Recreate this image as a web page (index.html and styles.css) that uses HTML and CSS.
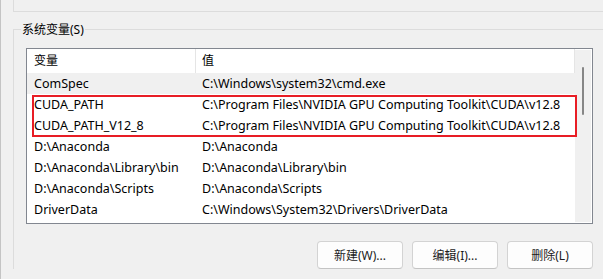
FILE: index.html
```html
<!DOCTYPE html>
<html lang="zh-CN">
  <head>
    <meta charset="UTF-8">
    <meta name="viewport" content="width=device-width, initial-scale=1.0">
    <title>环境变量</title>
    <link rel="stylesheet" href="styles.css">
  </head>

  <body>
    <div class="window">
      <div class="prev-group"></div>
      <fieldset class="group">
        <legend>系统变量(S)</legend>
        <div class="group-body">
          <div class="listbox">
            <div class="table">
              <div class="thead">
                <div class="cell name">变量</div>
                <div class="cell value">值</div>
              </div>
              <div class="row selected">
                <div class="cell name">ComSpec</div>
                <div class="cell value">C:\Windows\system32\cmd.exe</div>
              </div>
              <div class="marked">
                <div class="row">
                  <div class="cell name">CUDA_PATH</div>
                  <div class="cell value">C:\Program Files\NVIDIA GPU Computing Toolkit\CUDA\v12.8</div>
                </div>
                <div class="row">
                  <div class="cell name">CUDA_PATH_V12_8</div>
                  <div class="cell value">C:\Program Files\NVIDIA GPU Computing Toolkit\CUDA\v12.8</div>
                </div>
              </div>
              <div class="row">
                <div class="cell name">D:\Anaconda</div>
                <div class="cell value">D:\Anaconda</div>
              </div>
              <div class="row">
                <div class="cell name">D:\Anaconda\Library\bin</div>
                <div class="cell value">D:\Anaconda\Library\bin</div>
              </div>
              <div class="row">
                <div class="cell name">D:\Anaconda\Scripts</div>
                <div class="cell value">D:\Anaconda\Scripts</div>
              </div>
              <div class="row">
                <div class="cell name">DriverData</div>
                <div class="cell value">C:\Windows\System32\Drivers\DriverData</div>
              </div>
            </div>
            <div class="scrollbar">
              <div class="thumb"></div>
            </div>
          </div>
          <div class="buttons">
            <button>新建(W)...</button>
            <button>编辑(I)...</button>
            <button>删除(L)</button>
          </div>
        </div>
      </fieldset>
    </div>
  </body>
</html>
```

FILE: styles.css
```css
* {
  margin: 0;
  padding: 0;
  box-sizing: border-box;
}

body {
  background-color: #f0f0f0;
  font-family: "Noto Sans", "Noto Sans CJK SC", sans-serif;
  font-size: 12px;
  color: #000;
}

.window {
  height: 279px;
  border-left: 1px solid #c4c4c4;
  overflow: hidden;
}

/* bottom edge of the user variables group above */
.prev-group {
  margin-left: 12px;
  height: 12px;
  border-left: 1px solid #dcdcdc;
  border-bottom: 1px solid #dcdcdc;
}

.group {
  margin: 9px 0 0 12px;
  border: 0;
  border-top: 1px solid #dcdcdc;
  border-left: 1px solid #dcdcdc;
  padding: 10px 0 0 12px;
  min-width: 0;
}

.group legend {
  margin-left: -5px;
  padding: 0 1px;
  line-height: 17px;
}

.group-body {
  width: 567px;
}

.listbox {
  display: flex;
  height: 176px;
  border: 1px solid #828790;
  padding: 0 1px 1px 0;
  background-color: #fff;
  overflow: hidden;
}

.table {
  flex: 1;
  font-size: 12.5px;
}

.thead {
  display: flex;
  height: 24px;
  border-right: 1px solid #e5e5e5;
}

.thead .cell {
  line-height: 24px;
  font-size: 12px;
}

.row {
  display: flex;
  height: 21px;
  line-height: 21px;
}

.row.selected {
  background-color: #f0f0f0;
}

.cell {
  white-space: nowrap;
}

.cell.name {
  width: 169px;
  padding-left: 7px;
}

.thead .cell.name {
  border-right: 1px solid #e5e5e5;
}

.cell.value {
  padding-left: 6px;
}

.marked {
  position: relative;
}

.marked::after {
  content: "";
  position: absolute;
  left: 5px;
  right: -2px;
  top: 1px;
  bottom: -1px;
  border: 2px solid #e81d25;
}

.scrollbar {
  width: 16px;
  margin-top: 1px;
  padding-top: 17px;
  background-color: #f0f0f0;
}

.thumb {
  width: 2px;
  height: 48px;
  margin-left: 7px;
  border-radius: 1px;
  background-color: #868686;
}

.buttons {
  display: flex;
  justify-content: flex-end;
  gap: 9px;
  margin-top: 17px;
}

.buttons button {
  width: 86px;
  height: 28px;
  border: 1px solid #d3d3d3;
  border-bottom-color: #c4c4c4;
  border-radius: 4px;
  background-color: #fdfdfd;
  font-family: inherit;
  font-size: 12px;
  color: #1b1b1b;
}
```
